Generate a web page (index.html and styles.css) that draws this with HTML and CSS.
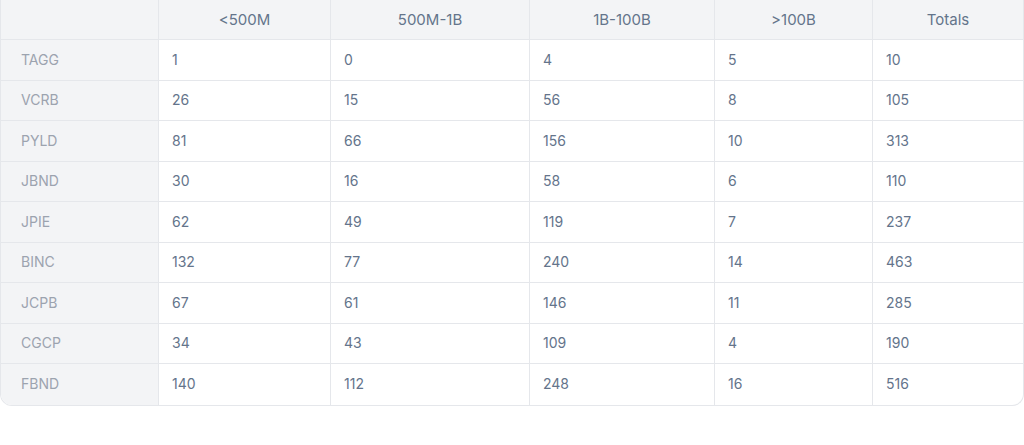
FILE: index.html
```html
<!DOCTYPE html>
<html>
<head>
<meta charset="utf-8">
<link rel="stylesheet" href="styles.css">
</head>
<body>
<div class="card">
  <table class="grid">
    <colgroup>
      <col class="c1"><col class="c2"><col class="c3"><col class="c4"><col class="c5"><col class="c6">
    </colgroup>
    <thead>
      <tr><th class="corner"></th><th>&lt;500M</th><th>500M-1B</th><th>1B-100B</th><th>&gt;100B</th><th>Totals</th></tr>
    </thead>
    <tbody>
      <tr><th>TAGG</th><td>1</td><td>0</td><td>4</td><td>5</td><td>10</td></tr>
      <tr><th>VCRB</th><td>26</td><td>15</td><td>56</td><td>8</td><td>105</td></tr>
      <tr><th>PYLD</th><td>81</td><td>66</td><td>156</td><td>10</td><td>313</td></tr>
      <tr><th>JBND</th><td>30</td><td>16</td><td>58</td><td>6</td><td>110</td></tr>
      <tr><th>JPIE</th><td>62</td><td>49</td><td>119</td><td>7</td><td>237</td></tr>
      <tr><th>BINC</th><td>132</td><td>77</td><td>240</td><td>14</td><td>463</td></tr>
      <tr><th>JCPB</th><td>67</td><td>61</td><td>146</td><td>11</td><td>285</td></tr>
      <tr><th>CGCP</th><td>34</td><td>43</td><td>109</td><td>4</td><td>190</td></tr>
      <tr class="last"><th>FBND</th><td>140</td><td>112</td><td>248</td><td>16</td><td>516</td></tr>
    </tbody>
  </table>
</div>
</body>
</html>
```
FILE: styles.css
```css
html, body {
  margin: 0;
  padding: 0;
  background: #ffffff;
}
body {
  font-family: Inter, "Liberation Sans", sans-serif;
  font-size: 14px;
}
.card {
  width: 1024px;
  box-sizing: border-box;
  border: 1px solid #e5e7eb;
  border-top: none;
  border-radius: 0 0 12px 12px;
  overflow: hidden;
}
.grid {
  width: 100%;
  table-layout: fixed;
  border-collapse: separate;
  border-spacing: 0;
}
.c1 { width: 158px; }
.c2 { width: 172px; }
.c3 { width: 199px; }
.c4 { width: 185px; }
.c5 { width: 158px; }
.c6 { width: auto; }
.grid th, .grid td {
  box-sizing: border-box;
  padding: 0;
  line-height: 20px;
  border-right: 1px solid #e5e7eb;
  border-bottom: 1px solid #e5e7eb;
  font-weight: 400;
  white-space: nowrap;
}
.grid th:last-child, .grid td:last-child {
  border-right: none;
}
.grid thead th {
  height: 40px;
  background: #f3f4f6;
  color: #64748b;
  text-align: center;
  font-size: 15px;
}
.grid tbody tr {
  height: 40.5px;
}
.grid tbody th {
  background: #f3f4f6;
  color: #9ca3af;
  text-align: left;
  padding-left: 20px;
}
.grid tbody td {
  color: #64748b;
  text-align: left;
  padding-left: 13px;
}
.grid tbody tr.last th, .grid tbody tr.last td {
  border-bottom: none;
}
```
